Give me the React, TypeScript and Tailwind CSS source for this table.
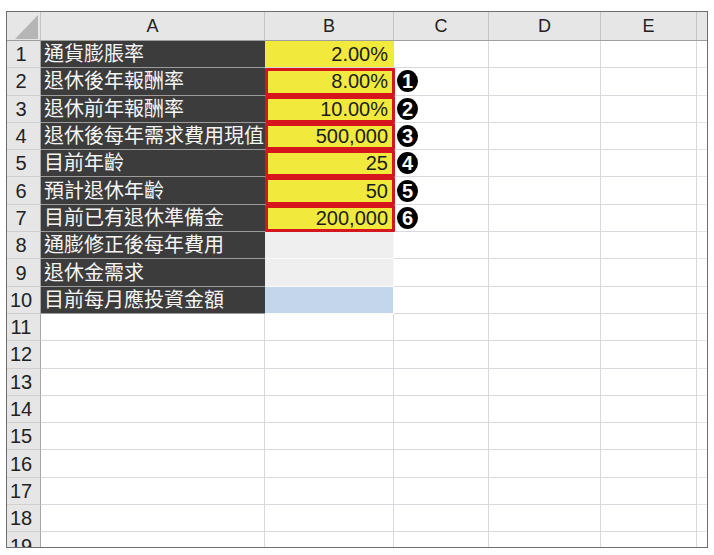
import React from 'react';

type Row = {
  label: string;
  value?: string;
  fill?: 'yellow' | 'gray' | 'blue';
  mark?: string;
};

const rows: Row[] = [
  { label: '通貨膨脹率', value: '2.00%', fill: 'yellow' },
  { label: '退休後年報酬率', value: '8.00%', fill: 'yellow', mark: '1' },
  { label: '退休前年報酬率', value: '10.00%', fill: 'yellow', mark: '2' },
  { label: '退休後每年需求費用現值', value: '500,000', fill: 'yellow', mark: '3' },
  { label: '目前年齡', value: '25', fill: 'yellow', mark: '4' },
  { label: '預計退休年齡', value: '50', fill: 'yellow', mark: '5' },
  { label: '目前已有退休準備金', value: '200,000', fill: 'yellow', mark: '6' },
  { label: '通膨修正後每年費用', fill: 'gray' },
  { label: '退休金需求', fill: 'gray' },
  { label: '目前每月應投資金額', fill: 'blue' },
];

const fillClass = {
  yellow: 'bg-[#f1ea3c]',
  gray: 'bg-[#efefef]',
  blue: 'bg-[#c4d6ec]',
};

const font = { fontFamily: '"Liberation Sans", "Noto Sans CJK TC", sans-serif' };

function RowNum({ n }: { n: number }) {
  return (
    <div className="w-[34px] shrink-0 h-full bg-[#e6e6e6] border-r border-r-[#a6a6a6] border-b border-b-[#cfcfcf] flex items-center justify-center pr-[5px] text-[20px] text-[#222]">
      {n}
    </div>
  );
}

function EmptyCells() {
  return (
    <>
      <div className="w-[95px] shrink-0 h-full border-r border-b border-[#d8d8de]" />
      <div className="w-[112px] shrink-0 h-full border-r border-b border-[#d8d8de]" />
      <div className="w-[96px] shrink-0 h-full border-r border-b border-[#d8d8de]" />
      <div className="flex-1 h-full border-b border-[#e4e4e8]" />
    </>
  );
}

export default function App() {
  const blank = Array.from({ length: 9 }, (_, i) => i + 11);

  return (
    <div className="w-[714px] h-[555px] bg-white pt-[11px] pl-[6px]" style={font}>
      <div className="w-[702px] h-[537px] border border-[#6e6e6e] overflow-hidden">
        {/* column header */}
        <div className="flex h-[29px] bg-[#e6e6e6] border-b border-[#9e9e9e] text-[18px] text-[#222]">
          <div className="w-[34px] shrink-0 h-full border-r border-[#c4c4c4] relative">
            <svg className="absolute left-[8px] top-[3px]" width="23" height="24" viewBox="0 0 23 24">
              <polygon points="23,0 23,24 0,24" fill="#b5b5b5" />
            </svg>
          </div>
          <div className="w-[224px] shrink-0 border-r border-[#c4c4c4] flex items-center justify-center">A</div>
          <div className="w-[129px] shrink-0 border-r border-[#c4c4c4] flex items-center justify-center">B</div>
          <div className="w-[95px] shrink-0 border-r border-[#c4c4c4] flex items-center justify-center">C</div>
          <div className="w-[112px] shrink-0 border-r border-[#c4c4c4] flex items-center justify-center">D</div>
          <div className="w-[96px] shrink-0 border-r border-[#c4c4c4] flex items-center justify-center">E</div>
          <div className="flex-1" />
        </div>

        {rows.map((r, i) => (
          <div key={i} className="flex h-[27.3px]">
            <RowNum n={i + 1} />
            <div className="w-[224px] shrink-0 h-full bg-[#3c3c3c] border-b border-[#9c9c9c] text-[#f5f5f5] text-[20px] leading-none flex items-center pl-[3px] whitespace-nowrap overflow-hidden">
              {r.label}
            </div>
            <div
              className={`w-[129px] shrink-0 h-full relative border-b border-r ${
                r.fill === 'yellow' ? 'border-[#d8d8d8]' : 'border-[#fafafa]'
              } ${fillClass[r.fill ?? 'gray']} flex items-center justify-end pr-[5px] text-[20px] text-[#1c1c1c]`}
            >
              {r.value}
              {r.mark && (
                <>
                  <div className="absolute left-0 -right-[2px] top-0 -bottom-px border-[3px] border-[#d5161d] rounded-[1px]" />
                  <span className="absolute left-[calc(100%+4px)] top-1/2 -translate-y-1/2 w-[21px] h-[22px] rounded-[50%] bg-black text-white text-[20px] font-bold leading-none flex items-center justify-center z-10">
                    {r.mark}
                  </span>
                </>
              )}
            </div>
            <EmptyCells />
          </div>
        ))}

        {blank.map((n) => (
          <div key={n} className="flex h-[27.3px]">
            <RowNum n={n} />
            <div className="w-[224px] shrink-0 h-full border-r border-b border-[#d8d8de]" />
            <div className="w-[129px] shrink-0 h-full border-r border-b border-[#d8d8de]" />
            <EmptyCells />
          </div>
        ))}
      </div>
    </div>
  );
}
